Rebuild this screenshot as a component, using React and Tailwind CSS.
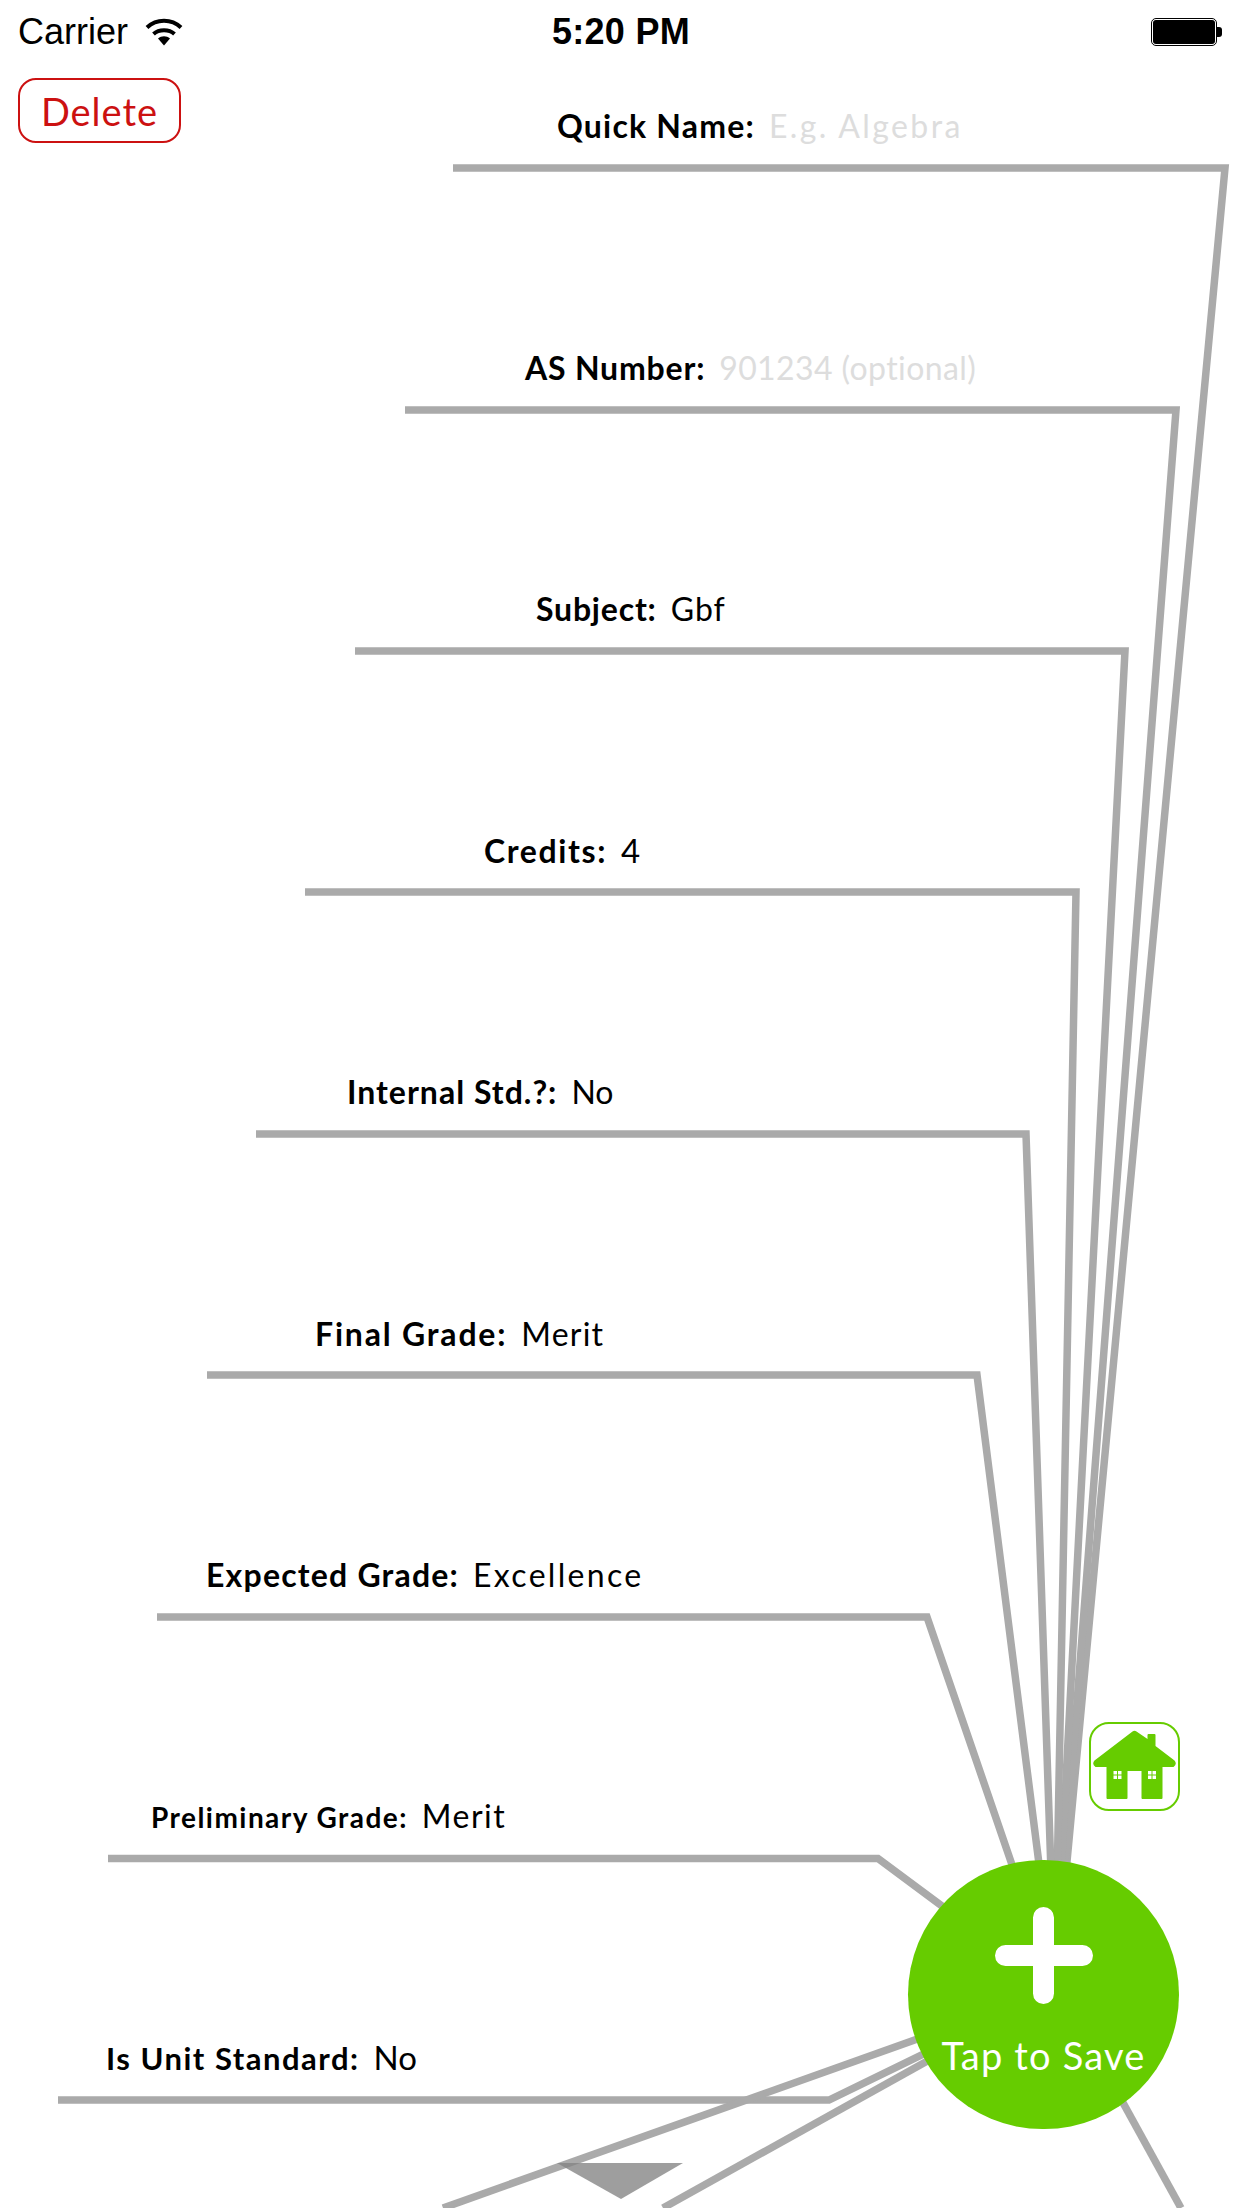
import React from 'react';

const CORNERS = [
    { left: 453, right: 1225, y: 168 },
    { left: 405, right: 1176, y: 410 },
    { left: 355, right: 1125, y: 651 },
    { left: 305, right: 1076, y: 892 },
    { left: 256, right: 1026, y: 1134 },
    { left: 207, right: 977, y: 1375 },
    { left: 157, right: 927, y: 1617 },
    { left: 108, right: 878, y: 1858.5 },
    { left: 58, right: 829, y: 2100 },
];

const FIELDS = [
    { label: 'Quick Name:', value: 'E.g. Algebra', placeholder: true, row: 'h-[84px]', indent: 'ml-[376px]', labelClass: 'text-[32px] tracking-[1.2px]', valueClass: 'text-[32px] tracking-[2.4px]' },
    { label: 'AS Number:', value: '901234 (optional)', placeholder: true, row: 'h-[241.5px]', indent: 'ml-[525px]', labelClass: 'text-[32px] tracking-[0.8px]', valueClass: 'text-[32px] tracking-[0.4px]' },
    { label: 'Subject:', value: 'Gbf', row: 'h-[241.5px]', indent: 'ml-[536px]', labelClass: 'text-[32px] tracking-[0.8px]', valueClass: 'text-[32px] tracking-[1px]' },
    { label: 'Credits:', value: '4', row: 'h-[241.5px]', indent: 'ml-[484px]', labelClass: 'text-[32px] tracking-[1.6px]', valueClass: 'text-[33px]' },
    { label: 'Internal Std.?:', value: 'No', row: 'h-[241.5px]', indent: 'ml-[347px]', labelClass: 'text-[32px] tracking-[1px]', valueClass: 'text-[32px]' },
    { label: 'Final Grade:', value: 'Merit', row: 'h-[241.5px]', indent: 'ml-[315px]', labelClass: 'text-[32px] tracking-[1.8px]', valueClass: 'text-[32px] tracking-[1.2px]' },
    { label: 'Expected Grade:', value: 'Excellence', row: 'h-[241.5px]', indent: 'ml-[206px]', labelClass: 'text-[32px] tracking-[1.2px]', valueClass: 'text-[32px] tracking-[2.3px]' },
    { label: 'Preliminary Grade:', value: 'Merit', row: 'h-[241.5px]', indent: 'ml-[151px]', labelClass: 'text-[28px] tracking-[1.45px]', valueClass: 'text-[32px] tracking-[1.5px]' },
    { label: 'Is Unit Standard:', value: 'No', row: 'h-[241.5px]', indent: 'ml-[106px]', labelClass: 'text-[31px] tracking-[1.5px]', valueClass: 'text-[33px]' },
];

const FanLines = () => (
    <svg className="absolute inset-0" width="1242" height="2208" viewBox="0 0 1242 2208" fill="none">
        <g stroke="#aaaaaa" strokeWidth="7.5">
            {CORNERS.map(c => (
                <polyline key={c.y} points={`${c.left},${c.y} ${c.right},${c.y} 1055,1990`} />
            ))}
            <line x1="1055" y1="1990" x2="443" y2="2208" />
            <line x1="1055" y1="1990" x2="663" y2="2208" />
            <line x1="1062" y1="1992" x2="1181" y2="2208" />
        </g>
        <polygon points="557,2163 683,2163 621,2199" fill="#848484" fillOpacity="0.79" />
    </svg>
);

const WifiIcon = () => (
    <svg width="38" height="28" viewBox="0 0 38 28" fill="none" className="ml-[17px]">
        <path d="M2 9.5 C11.5 0.5 26.5 0.5 36 9.5" stroke="#000" strokeWidth="4" />
        <path d="M8.5 16 C14 11 24 11 29.5 16" stroke="#000" strokeWidth="4" />
        <path d="M13 20.5 C16.5 17.5 21.5 17.5 25 20.5 L19 27.5 Z" fill="#000" />
    </svg>
);

const BatteryIcon = () => (
    <div className="flex items-center">
        <div className="w-[66px] h-[28px] rounded-[5px] border border-black p-[1px]">
            <div className="w-full h-full rounded-[3px] bg-black" />
        </div>
        <div className="w-[5px] h-[10px] rounded-r-[3px] bg-black" />
    </div>
);

const StatusBar = () => (
    <div className="relative flex items-center justify-between h-[62px] pl-[18px] pr-[20px] pt-[1px] text-[36px] leading-none text-black font-['Liberation_Sans',Arial,sans-serif]">
        <div className="flex items-center w-[400px]">
            <span>Carrier</span>
            <WifiIcon />
        </div>
        <span className="ml-[2px] font-bold tracking-[0.3px]">5:20 PM</span>
        <div className="flex justify-end w-[400px]">
            <BatteryIcon />
        </div>
    </div>
);

const HomeButton = () => (
    <div className="absolute left-[1089px] top-[1722px] w-[91px] h-[89px] rounded-[20px] border-2 border-[#66cc00] bg-white">
        <svg className="absolute -left-[2px] -top-[2px]" width="91" height="89" viewBox="0 0 90 89">
            <path
                fill="#66cc00"
                fillRule="evenodd"
                d="M43 9.5 Q45 8 47 9.5 L58 17 V13 Q58 12 59 12 H65 Q66 12 66 13 V24 L85 38.5 Q88 42 84 45 H73 V76 Q73 77 72 77 H53 Q52 77 52 76 V49 H38 V76 Q38 77 37 77 H18 Q17 77 17 76 V45 H6 Q2 42 5 38.5 Z
                M24 49 V52.5 H27.5 V49 Z M28.5 49 V52.5 H32 V49 Z M24 53.5 V57 H27.5 V53.5 Z M28.5 53.5 V57 H32 V53.5 Z
                M58.5 49 V52.5 H62 V49 Z M63 49 V52.5 H66.5 V49 Z M58.5 53.5 V57 H62 V53.5 Z M63 53.5 V57 H66.5 V53.5 Z"
            />
        </svg>
    </div>
);

const SaveButton = () => (
    <div className="absolute left-[908px] top-[1860px] w-[271px] h-[269px] rounded-full bg-[#66cc00] flex flex-col items-center pt-[47px] text-white">
        <svg width="99" height="97" viewBox="0 0 99 97" className="-ml-[1px]">
            <path d="M49.5 10.5 V86.5 M11.5 48.5 H88.5" stroke="#fff" strokeWidth="21" strokeLinecap="round" />
        </svg>
        <span className="mt-[27px] text-[38px] leading-[48px] tracking-[1.2px] font-['Lato',sans-serif]">Tap to Save</span>
    </div>
);

const App = () => {
    return (
        <div className="relative w-[1242px] h-[2208px] overflow-hidden bg-white text-black font-['Lato',sans-serif]">
            <FanLines />
            <div className="relative">
                <StatusBar />
                {FIELDS.map((field, i) => (
                    <div key={field.label} className={`flex items-end ${field.row}`}>
                        {i === 0 && (
                            <button className="self-start mt-[16px] ml-[18px] w-[163px] h-[65px] rounded-[18px] border-2 border-[#cc1111] text-[#cc1111] text-[38px] leading-none tracking-[1px]">
                                Delete
                            </button>
                        )}
                        <div className={`flex items-baseline gap-[14px] ${field.indent}`}>
                            <span className={`font-bold leading-[40px] ${field.labelClass}`}>{field.label}</span>
                            <span className={`leading-[40px] ${field.valueClass} ${field.placeholder ? 'text-[#dddddd]' : 'text-black'}`}>{field.value}</span>
                        </div>
                    </div>
                ))}
            </div>
            <HomeButton />
            <SaveButton />
        </div>
    );
};

export default App;
